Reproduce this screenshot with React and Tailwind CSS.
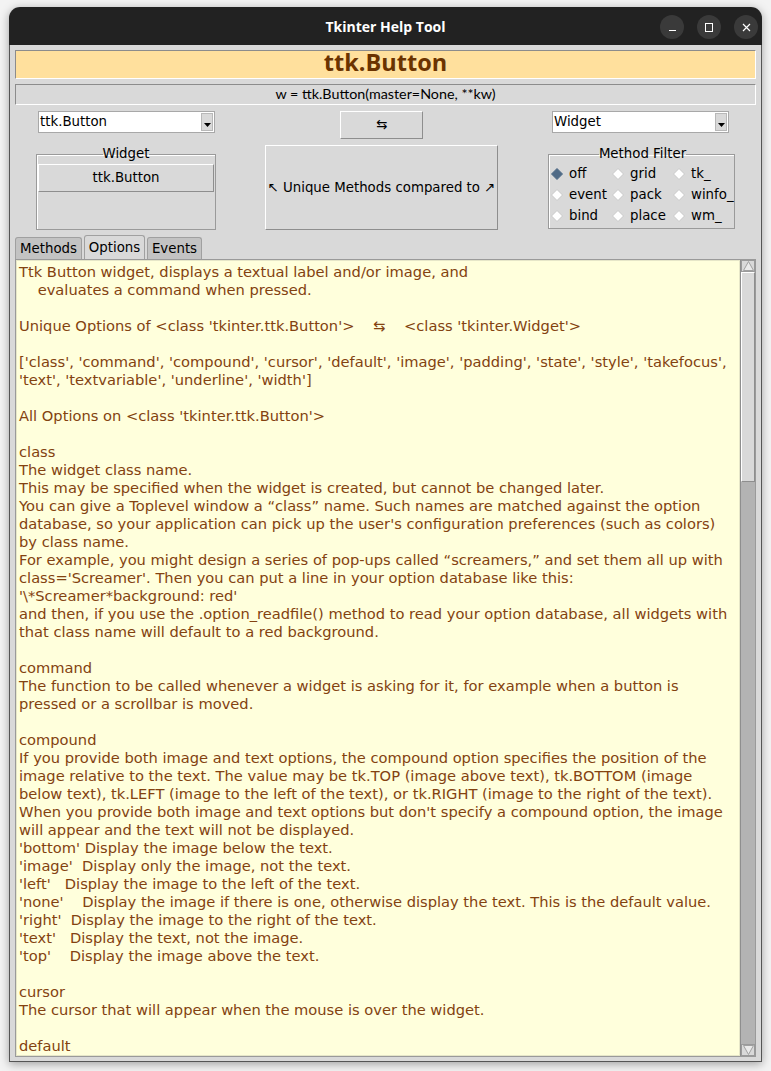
const lines = [
  "Ttk Button widget, displays a textual label and/or image, and",
  "    evaluates a command when pressed.",
  "",
  "Unique Options of <class 'tkinter.ttk.Button'>    ⇆    <class 'tkinter.Widget'>",
  "",
  "['class', 'command', 'compound', 'cursor', 'default', 'image', 'padding', 'state', 'style', 'takefocus',",
  "'text', 'textvariable', 'underline', 'width']",
  "",
  "All Options on <class 'tkinter.ttk.Button'>",
  "",
  "class",
  "The widget class name.",
  "This may be specified when the widget is created, but cannot be changed later.",
  "You can give a Toplevel window a “class” name. Such names are matched against the option",
  "database, so your application can pick up the user's configuration preferences (such as colors)",
  "by class name.",
  "For example, you might design a series of pop-ups called “screamers,” and set them all up with",
  "class='Screamer'. Then you can put a line in your option database like this:",
  "'\\*Screamer*background: red'",
  "and then, if you use the .option_readfile() method to read your option database, all widgets with",
  "that class name will default to a red background.",
  "",
  "command",
  "The function to be called whenever a widget is asking for it, for example when a button is",
  "pressed or a scrollbar is moved.",
  "",
  "compound",
  "If you provide both image and text options, the compound option specifies the position of the",
  "image relative to the text. The value may be tk.TOP (image above text), tk.BOTTOM (image",
  "below text), tk.LEFT (image to the left of the text), or tk.RIGHT (image to the right of the text).",
  "When you provide both image and text options but don't specify a compound option, the image",
  "will appear and the text will not be displayed.",
  "'bottom' Display the image below the text.",
  "'image'  Display only the image, not the text.",
  "'left'   Display the image to the left of the text.",
  "'none'    Display the image if there is one, otherwise display the text. This is the default value.",
  "'right'  Display the image to the right of the text.",
  "'text'   Display the text, not the image.",
  "'top'    Display the image above the text.",
  "",
  "cursor",
  "The cursor that will appear when the mouse is over the widget.",
  "",
  "default",
];

const filters = [
  ["off", "grid", "tk_"],
  ["event", "pack", "winfo_"],
  ["bind", "place", "wm_"],
];

function Diamond({ on }) {
  return (
    <svg width="12" height="12" viewBox="0 0 12 12" className="shrink-0">
      <polygon
        points="6,0.5 11.5,6 6,11.5 0.5,6"
        fill={on ? "#4f6a86" : "#ffffff"}
        stroke={on ? "#4f6a86" : "#c8c8c8"}
        strokeWidth="1"
      />
    </svg>
  );
}

function Combo({ value, className }) {
  return (
    <div
      className={`flex h-[22px] items-center border border-[#a8a8a8] bg-white ${className}`}
    >
      <span className="flex-1 pl-[1px] text-[13.33px] leading-none text-black">
        {value}
      </span>
      <div className="mr-[1px] flex h-[18px] w-[12px] items-end justify-center border border-[#b8b8b8] bg-[#d9d9d9] pb-[3px]">
        <svg width="7" height="4" viewBox="0 0 7 4">
          <polygon points="0,0 7,0 3.5,4" fill="#000" />
        </svg>
      </div>
    </div>
  );
}

export default function App() {
  return (
    <div
      className="h-[1071px] w-[771px] bg-[#f3f3f3] pl-[9px] pt-[7px]"
      style={{ fontFamily: "'DejaVu Sans', sans-serif" }}
    >
      <div className="flex h-[1055px] w-[753px] flex-col overflow-hidden rounded-t-[11px] shadow-[0_2px_10px_rgba(0,0,0,0.35)]">
        {/* title bar */}
        <div className="relative flex h-[38px] shrink-0 items-center justify-center bg-[#222222]">
          <span
            className="text-[14px] font-bold text-white"
            style={{ fontFamily: "'Open Sans', sans-serif" }}
          >
            Tkinter Help Tool
          </span>
          <div className="absolute right-[4px] top-[8px] flex gap-[13px]">
            <div className="flex h-[24px] w-[24px] items-center justify-center rounded-full bg-[#3a3a3a]">
              <div className="mt-[6px] h-[1px] w-[7px] bg-white" />
            </div>
            <div className="flex h-[24px] w-[24px] items-center justify-center rounded-full bg-[#3a3a3a]">
              <div className="h-[9px] w-[8px] border border-white" />
            </div>
            <div className="flex h-[24px] w-[24px] items-center justify-center rounded-full bg-[#3a3a3a]">
              <svg width="9" height="9" viewBox="0 0 9 9">
                <path d="M1 1L8 8M8 1L1 8" stroke="#fff" strokeWidth="1.2" />
              </svg>
            </div>
          </div>
        </div>

        {/* body */}
        <div className="flex flex-1 flex-col border-x border-b border-[#555555] bg-[#d9d9d9] px-[5px] pt-[5px]">
          <div className="flex h-[29px] items-center justify-center border border-[#8c8c8c] border-b-white border-r-white bg-[#ffe09d] pb-[4px]">
            <span
              className="text-[23.5px] font-bold leading-none text-[#6b3300]"
              style={{ fontFamily: "'Open Sans', sans-serif" }}
            >
              ttk.Button
            </span>
          </div>

          <div className="mt-[5px] flex h-[21px] items-center justify-center border border-[#8c8c8c] border-b-white border-r-white pb-[1px]">
            <span
              className="text-[14.3px] leading-none text-black"
              style={{ fontFamily: "Lato, sans-serif" }}
            >
              w = ttk.Button(master=None, **kw)
            </span>
          </div>

          {/* combobox row */}
          <div className="mt-[6px] flex items-start text-[13.33px]">
            <Combo value="ttk.Button" className="ml-[23px] w-[177px]" />
            <div className="ml-[125px] flex h-[28px] w-[83px] items-center justify-center border border-[#8e8e8e] border-l-white border-t-white text-black">
              ⇆
            </div>
            <Combo value="Widget" className="ml-[129px] w-[177px]" />
          </div>

          {/* second row */}
          <div className="mt-[6px] flex items-start text-[13.33px]">
            <fieldset className="ml-[21px] h-[85px] w-[180px] border border-[#9a9a9a] px-[1px] pb-0 shadow-[inset_1px_1px_0_#fff]">
              <legend className="mx-auto px-0 leading-[18px] text-black">
                Widget
              </legend>
              <div className="mt-[1px] flex h-[28px] items-center justify-center border border-[#8e8e8e] border-l-white border-t-white text-black">
                ttk.Button
              </div>
            </fieldset>

            <div className="ml-[49px] flex h-[85px] w-[233px] items-center justify-center whitespace-nowrap border border-[#8e8e8e] border-l-white border-t-white text-black">
              ↖ Unique Methods compared to ↗
            </div>

            <fieldset className="ml-[50px] h-[84px] w-[187px] border border-[#9a9a9a] pl-[2px] pr-0 pb-0 shadow-[inset_1px_1px_0_#fff]">
              <legend className="mx-auto px-0 leading-[18px] text-black">
                Method Filter
              </legend>
              <div className="grid grid-cols-[61px_61px_61px]">
                {filters.map((row) =>
                  row.map((f) => (
                    <div key={f} className="flex h-[21px] items-center gap-[6px]">
                      <Diamond on={f === "off"} />
                      <span className="leading-none text-black">{f}</span>
                    </div>
                  ))
                )}
              </div>
            </fieldset>
          </div>

          {/* tabs */}
          <div className="mt-[5px] flex items-end gap-[2px] text-[13.33px] text-black">
            <div className="flex h-[22px] w-[67px] items-center justify-center rounded-t-[3px] border border-b-0 border-[#a0a0a0] bg-[#c3c3c3]">
              Methods
            </div>
            <div className="flex h-[24px] w-[61px] items-center justify-center rounded-t-[3px] border border-b-0 border-[#a0a0a0] bg-[#d9d9d9]">
              Options
            </div>
            <div className="flex h-[22px] w-[55px] items-center justify-center rounded-t-[3px] border border-b-0 border-[#a0a0a0] bg-[#c3c3c3]">
              Events
            </div>
          </div>

          {/* text area */}
          <div className="flex h-[798px] border border-[#9a9a9a]">
            <div className="flex-1 overflow-hidden border border-[#e6e6c8] bg-[#ffffdc] pl-[2px] pt-[2px]">
              {lines.map((l, i) => (
                <div
                  key={i}
                  className="h-[18px] whitespace-pre text-[14.67px] leading-[18px] text-[#834210]"
                >
                  {l}
                </div>
              ))}
            </div>
            <div className="flex w-[15px] flex-col border-l border-[#8e8e8e] bg-[#b3b3b3]">
              <div className="flex h-[12px] items-center justify-center border border-[#9a9a9a] bg-[#d9d9d9]">
                <svg width="11" height="10" viewBox="0 0 11 10">
                  <polygon points="5.5,0.5 10.5,9.5 0.5,9.5" fill="#eaeaea" stroke="#a0a0a0" />
                </svg>
              </div>
              <div className="h-[210px] border border-[#8e8e8e] border-l-white border-t-white bg-[#d9d9d9]" />
              <div className="flex-1" />
              <div className="flex h-[12px] items-center justify-center border border-[#9a9a9a] bg-[#d9d9d9]">
                <svg width="11" height="10" viewBox="0 0 11 10">
                  <polygon points="0.5,0.5 10.5,0.5 5.5,9.5" fill="#eaeaea" stroke="#a0a0a0" />
                </svg>
              </div>
            </div>
          </div>
        </div>
      </div>
    </div>
  );
}
